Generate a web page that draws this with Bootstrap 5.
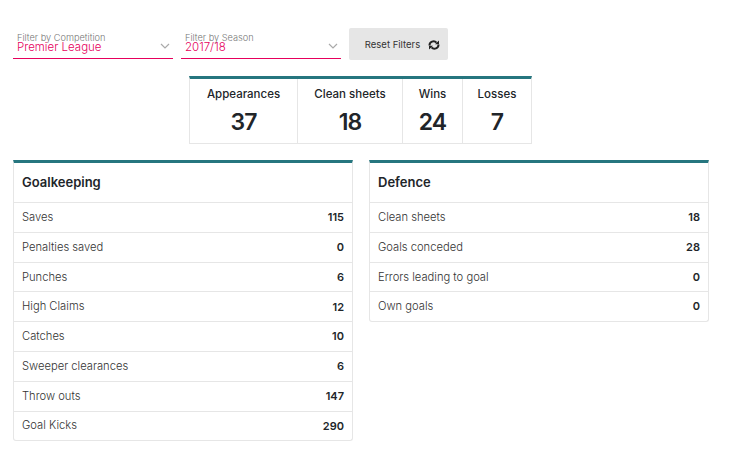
<!DOCTYPE html>
<html lang="en">
  <head>
    <meta charset="UTF-8" />
    <title>Player stats</title>
    <meta name="viewport" content="width=device-width, initial-scale=1" />
    <link href="https://cdn.jsdelivr.net/npm/bootstrap@5.3.0/dist/css/bootstrap.min.css" rel="stylesheet" />
    <style>
      body { font-family: "Inter", "Liberation Sans", sans-serif; color: #212529; background: #fff; }
      .page-wrap { width: 696px; margin-left: 13px; padding-top: 28px; }
      .filter-box { width: 160px; height: 31px; border-bottom: 1px solid #e6005c; position: relative; padding-left: 4px; padding-top: 5px; }
      .filter-label { font-size: 9.2px; line-height: 9px; color: #777; font-weight: 300; }
      .filter-value { font-size: 11.5px; line-height: 10px; color: #e6005c; font-weight: 300; }
      .filter-chevron { position: absolute; right: 3px; top: 15px; }
      .reset-btn { width: 99px; height: 32px; background: #e6e6e6; border: 0; border-radius: 2px; font-size: 9.5px; color: #333; padding: 2px 0 0 8px; }
      .stat-strip { width: 343px; margin: 16px auto 0 176px; border: 1px solid #e6e6e6; border-top: 3px solid #26767f; }
      .stat-cell { height: 64px; text-align: center; border-right: 1px solid #e6e6e6; padding-top: 7px; font-size: 11.5px; font-weight: 500; }
      .stat-cell:last-child { border-right: 0; }
      .stat-num { font-size: 23px; font-weight: 600; letter-spacing: -1px; line-height: 30px; margin-top: 4px; }
      .stat-panel { width: 340px; border: 1px solid #e6e6e6; border-top: 3px solid #26767f; border-radius: 0 0 3px 3px; }
      .stat-head { height: 40px; line-height: 39px; padding-left: 8px; font-size: 13px; font-weight: 600; border-bottom: 1px solid #e6e6e6; }
      .stat-row { height: 29.8px; padding: 0 8px; font-size: 11.2px; font-weight: 300; color: #333; border-bottom: 1px solid #e6e6e6; }
      .stat-row:last-child { border-bottom: 0; height: 28.4px; }
      .stat-row b { font-size: 11px; font-weight: 600; color: #212529; }
    </style>
  </head>
  <body>
    <div class="page-wrap">
      <div class="d-flex gap-2">
        <div class="filter-box">
          <div class="filter-label">Filter by Competition</div>
          <div class="filter-value">Premier League</div>
          <svg class="filter-chevron" width="10" height="6" viewBox="0 0 10 6"><path d="M1 1l4 4 4-4" fill="none" stroke="#aaa" stroke-width="1.2"/></svg>
        </div>
        <div class="filter-box">
          <div class="filter-label">Filter by Season</div>
          <div class="filter-value">2017/18</div>
          <svg class="filter-chevron" width="10" height="6" viewBox="0 0 10 6"><path d="M1 1l4 4 4-4" fill="none" stroke="#aaa" stroke-width="1.2"/></svg>
        </div>
        <button class="reset-btn d-flex align-items-center justify-content-center gap-2" type="button">
          Reset Filters
          <svg width="12" height="10" viewBox="0 0 12 10"><path d="M1.5 5.5a4 4 0 0 1 7-2.8M10.5 4.5a4 4 0 0 1-7 2.8" fill="none" stroke="#222" stroke-width="2"/><path d="M7 4.2h4V.4zM5 5.8H1v3.8z" fill="#222"/></svg>
        </button>
      </div>

      <div class="stat-strip d-flex">
        <div class="stat-cell" style="width:108px">Appearances<div class="stat-num">37</div></div>
        <div class="stat-cell" style="width:105px">Clean sheets<div class="stat-num">18</div></div>
        <div class="stat-cell" style="width:60px">Wins<div class="stat-num">24</div></div>
        <div class="stat-cell" style="width:68px">Losses<div class="stat-num">7</div></div>
      </div>

      <div class="d-flex justify-content-between align-items-start mt-3">
        <div class="stat-panel">
          <div class="stat-head">Goalkeeping</div>
          <div class="stat-row d-flex justify-content-between align-items-center"><span>Saves</span><b>115</b></div>
          <div class="stat-row d-flex justify-content-between align-items-center"><span>Penalties saved</span><b>0</b></div>
          <div class="stat-row d-flex justify-content-between align-items-center"><span>Punches</span><b>6</b></div>
          <div class="stat-row d-flex justify-content-between align-items-center"><span>High Claims</span><b>12</b></div>
          <div class="stat-row d-flex justify-content-between align-items-center"><span>Catches</span><b>10</b></div>
          <div class="stat-row d-flex justify-content-between align-items-center"><span>Sweeper clearances</span><b>6</b></div>
          <div class="stat-row d-flex justify-content-between align-items-center"><span>Throw outs</span><b>147</b></div>
          <div class="stat-row d-flex justify-content-between align-items-center"><span>Goal Kicks</span><b>290</b></div>
        </div>
        <div class="stat-panel">
          <div class="stat-head">Defence</div>
          <div class="stat-row d-flex justify-content-between align-items-center"><span>Clean sheets</span><b>18</b></div>
          <div class="stat-row d-flex justify-content-between align-items-center"><span>Goals conceded</span><b>28</b></div>
          <div class="stat-row d-flex justify-content-between align-items-center"><span>Errors leading to goal</span><b>0</b></div>
          <div class="stat-row d-flex justify-content-between align-items-center"><span>Own goals</span><b>0</b></div>
        </div>
      </div>
    </div>
    <script src="https://cdn.jsdelivr.net/npm/bootstrap@5.3.0/dist/js/bootstrap.bundle.min.js"></script>
  </body>
</html>
